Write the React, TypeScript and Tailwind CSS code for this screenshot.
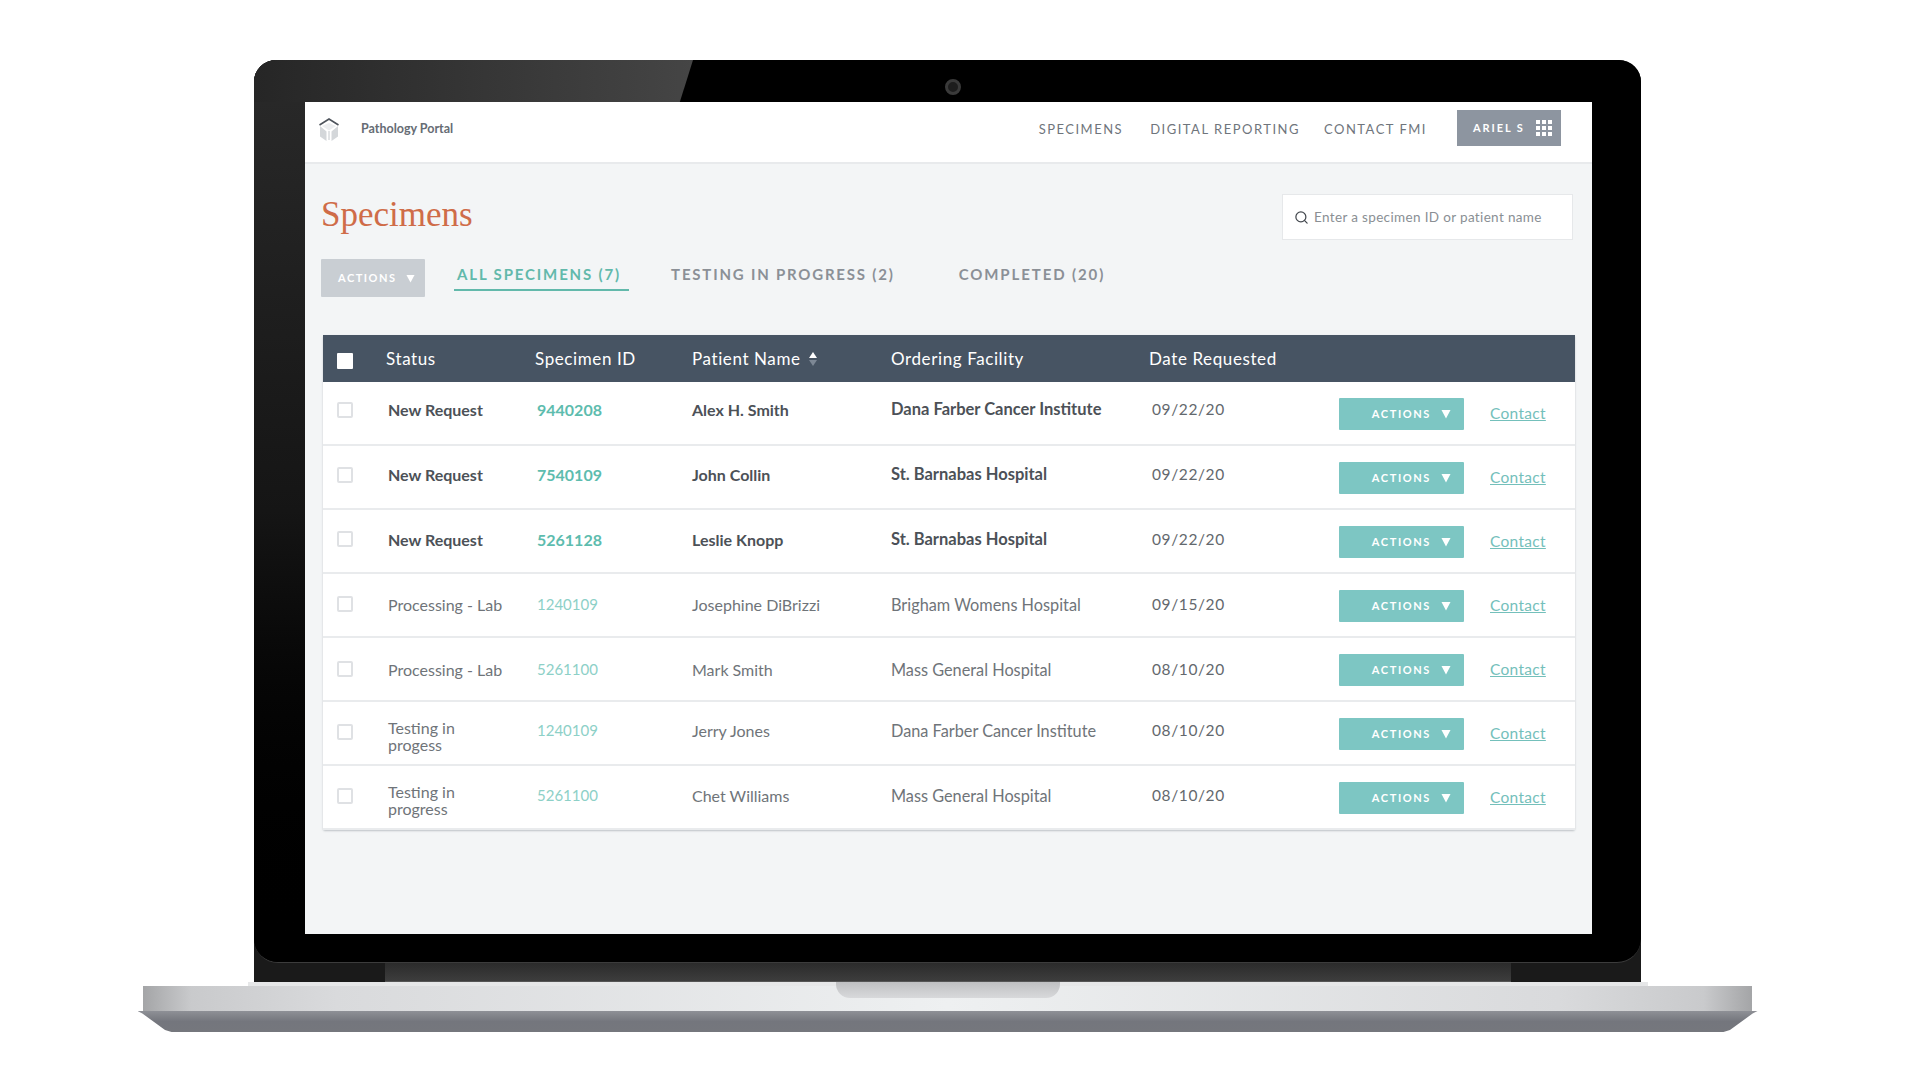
import { Search } from "lucide-react";

const rows = [
  { status: "New Request", id: "9440208", name: "Alex H. Smith", facility: "Dana Farber Cancer Institute", date: "09/22/20", strong: true, pad: "pt-[19px]", box: "pt-[20px]" },
  { status: "New Request", id: "7540109", name: "John Collin", facility: "St. Barnabas Hospital", date: "09/22/20", strong: true, pad: "pt-[20px]", box: "pt-[21px]" },
  { status: "New Request", id: "5261128", name: "Leslie Knopp", facility: "St. Barnabas Hospital", date: "09/22/20", strong: true, pad: "pt-[21px]", box: "pt-[21px]" },
  { status: "Processing - Lab", id: "1240109", name: "Josephine DiBrizzi", facility: "Brigham Womens Hospital", date: "09/15/20", strong: false, pad: "pt-[22px]", box: "pt-[22px]" },
  { status: "Processing - Lab", id: "5261100", name: "Mark Smith", facility: "Mass General Hospital", date: "08/10/20", strong: false, pad: "pt-[23px]", box: "pt-[23px]" },
  { status: "Testing in progess", id: "1240109", name: "Jerry Jones", facility: "Dana Farber Cancer Institute", date: "08/10/20", strong: false, pad: "pt-[20px]", box: "pt-[22px]" },
  { status: "Testing in progress", id: "5261100", name: "Chet Williams", facility: "Mass General Hospital", date: "08/10/20", strong: false, pad: "pt-[21px]", box: "pt-[22px]" },
];

const gridCols = "grid grid-cols-[64px_149px_156px_199px_260px_187px_151px_1fr]";

function Caret({ className }: { className: string }) {
  return (
    <svg viewBox="0 0 10 10" className={className} fill="currentColor">
      <path d="M0.5 1h9L5 9.5z" />
    </svg>
  );
}

function Logo() {
  return (
    <svg viewBox="0 0 22 24" className="h-[24px] w-[22px]" fill="none">
      <path d="M2 8v10.5L8.5 23V13.5zM20 8v10.5L13.5 23V13.5z" fill="#d4d7da" />
      <path d="M4 8l7 4.5L18 8l-7-3z" fill="#eceef0" />
      <path d="M11 13v9" stroke="#c4c8cc" strokeWidth="1" />
      <path d="M1.5 7L11 1l9.5 6" stroke="#4e545c" strokeWidth="1.6" />
    </svg>
  );
}

function AppGrid() {
  return (
    <div className="grid grid-cols-3 gap-[2px]">
      {Array.from({ length: 9 }).map((_, i) => (
        <div key={i} className="h-[4px] w-[4px] bg-white" />
      ))}
    </div>
  );
}

function Checkbox() {
  return <div className="h-[16px] w-[16px] rounded-[2px] border-2 border-[#dfe1e4] bg-white" />;
}

function Row({ r }: { r: (typeof rows)[number] }) {
  const twoLine = r.status.startsWith("Testing");
  return (
    <div className={`${gridCols} h-[64px] border-b-2 border-[#e9ebed] text-[16px] ${r.strong ? "font-bold text-[#4c5157]" : "text-[#6f7479]"}`}>
      <div className={`pl-[14px] ${r.box}`}>
        <Checkbox />
      </div>
      <div className={`pl-[1px] leading-[17px] ${twoLine ? "w-[90px] pt-[17px]" : r.pad}`}>{r.status}</div>
      <div className={`pl-[1px] leading-[17px] ${r.pad} ${r.strong ? "text-[#5dbcae]" : "text-[15px] text-[#8dd0c7]"}`}>{r.id}</div>
      <div className={`leading-[17px] ${r.pad}`}>{r.name}</div>
      <div className={`leading-[17px] ${r.pad} ${r.strong ? "text-[16.5px]" : "text-[16.3px]"}`}>{r.facility}</div>
      <div className={`pl-[1px] text-[15.5px] font-normal leading-[17px] tracking-[0.6px] text-[#63686d] ${r.pad}`}>{r.date}</div>
      <div className="pl-[1px] pt-[16px]">
        <button className="flex h-[32px] w-[125px] items-center justify-end gap-[10px] rounded-[1px] bg-[#7dc6c3] pr-[13px] text-[11px] font-bold tracking-[1.6px] text-white">
          ACTIONS
          <Caret className="h-[10px] w-[10px]" />
        </button>
      </div>
      <div className="pl-[1px] pt-[21px] leading-[20px]">
        <a className="text-[15.5px] font-normal tracking-[0.3px] text-[#74c0bb] underline">Contact</a>
      </div>
      <div />
    </div>
  );
}

export default function App() {
  return (
    <div className="flex h-[1080px] w-[1920px] flex-col items-center overflow-hidden bg-white pr-[25px] pt-[60px] font-['Lato',sans-serif]">
      {/* Lid */}
      <div className="relative flex h-[922px] w-[1387px] flex-col rounded-t-[22px] bg-[#1a1a1a]">
        <div className="relative h-[903px] overflow-hidden rounded-t-[22px] rounded-b-[24px] border-b border-[#3c3c3c] bg-black pl-[51px] pr-[49px] pt-[42px]">
          {/* Left band and glare */}
          <div className="absolute inset-y-0 left-0 w-[51px] bg-gradient-to-b from-[#2a2a2a] via-[#151515] to-black" />
          <div className="absolute left-0 top-0 h-[42px] w-[439px] bg-gradient-to-r from-[#262626] to-[#454545] [clip-path:polygon(0_0,100%_0,97%_100%,0_100%)]" />
          {/* Camera */}
          <div className="absolute left-[691px] top-[19px] h-[16px] w-[16px] rounded-full border-[3px] border-[#3a3a3a] bg-[#1d1d1d]" />

          {/* Screen */}
          <div className="relative flex h-[832px] flex-col bg-[#f3f5f6]">
            <header className="flex h-[62px] items-start border-b-2 border-[#e8eaec] bg-white pl-[13px] pr-[31px] pt-[8px]">
              <div className="mt-[8px]">
                <Logo />
              </div>
              <span className="ml-[21px] mt-[9px] text-[12.5px] font-bold leading-[20px] text-[#666c74]">Pathology Portal</span>
              <nav className="ml-auto mt-[9px] flex items-center text-[13px] leading-[20px] tracking-[1.5px] text-[#6f757c]">
                <a>SPECIMENS</a>
                <a className="ml-[27px]">DIGITAL REPORTING</a>
                <a className="ml-[24px]">CONTACT FMI</a>
              </nav>
              <button className="ml-[30px] flex h-[36px] w-[104px] items-center justify-between bg-[#8d95a0] pl-[16px] pr-[9px] text-[11px] font-bold tracking-[1.9px] text-white">
                ARIEL S
                <AppGrid />
              </button>
            </header>

            <div className="flex flex-col pl-[16px] pr-[17px]">
              <div className="flex items-start justify-between pt-[30px]">
                <h1 className="pt-[1px] font-['Liberation_Serif',serif] text-[35px] leading-[40px] text-[#cf6c48]">Specimens</h1>
                <div className="mr-[2px] flex h-[46px] w-[291px] items-center gap-[5px] border border-[#e6e8ea] bg-white pl-[11px] text-[13.5px] tracking-[0.35px] text-[#8a8f94]">
                  <Search className="h-[15px] w-[15px] text-[#44494f]" strokeWidth={2} />
                  Enter a specimen ID or patient name
                </div>
              </div>

              <div className="mt-[19px] flex items-start">
                <button className="flex h-[38px] w-[104px] items-center gap-[10px] rounded-[1px] bg-[#c9ced3] pl-[17px] text-[11px] font-bold tracking-[1.5px] text-white">
                  ACTIONS
                  <Caret className="h-[9px] w-[9px]" />
                </button>
                <div className="ml-[29px] border-b-2 border-[#62b9ab] pb-[4px] pl-[3px] pr-[8px] pt-[4px] text-[15px] font-bold leading-[22px] tracking-[1.85px] text-[#62b9ab]">
                  ALL SPECIMENS (7)
                </div>
                <div className="ml-[42px] pt-[4px] text-[15px] font-bold leading-[22px] tracking-[1.8px] text-[#8b9096]">TESTING IN PROGRESS (2)</div>
                <div className="ml-[64px] pt-[4px] text-[15px] font-bold leading-[22px] tracking-[1.9px] text-[#8b9096]">COMPLETED (20)</div>
              </div>

              {/* Table */}
              <div className="ml-[2px] mt-[38px] w-[1252px] rounded-[2px] bg-white shadow-[0_1px_2px_rgba(90,100,110,0.35)]">
                <div className={`${gridCols} h-[47px] items-center bg-[#475463] pt-[8px] text-[17px] tracking-[0.6px] text-white`}>
                  <div className="pl-[14px] pt-[4px]">
                    <div className="h-[16px] w-[16px] rounded-[1px] bg-white" />
                  </div>
                  <div className="-ml-[1px]">Status</div>
                  <div className="-ml-[1px]">Specimen ID</div>
                  <div className="flex items-center gap-[8px]">
                    Patient Name
                    <div className="flex flex-col gap-[2px]">
                      <div className="h-0 w-0 border-x-[4px] border-b-[6px] border-x-transparent border-b-white" />
                      <div className="h-0 w-0 border-x-[4px] border-t-[6px] border-x-transparent border-t-[#7d8895]" />
                    </div>
                  </div>
                  <div>Ordering Facility</div>
                  <div className="-ml-[2px]">Date Requested</div>
                  <div />
                  <div />
                  <div />
                </div>
                {rows.map((r, i) => (
                  <Row key={i} r={r} />
                ))}
              </div>
            </div>
          </div>
        </div>
        {/* Hinge */}
        <div className="flex h-[19px] justify-center">
          <div className="h-[19px] w-[1126px] border-b border-[#555] bg-gradient-to-b from-[#2b2b2b] to-[#3d3d3d]" />
        </div>
      </div>

      {/* Base */}
      <div className="h-[4px] w-[1400px] bg-[#e6e7e8]" />
      <div className="relative h-[25px] w-[1609px] bg-[linear-gradient(90deg,#a4a5a7_0%,#c9cacc_3%,#d9dadc_12%,#eef0f1_50%,#d9dadc_88%,#c9cacc_97%,#a4a5a7_100%)]">
        <div className="absolute -top-[4px] left-[693px] h-[16px] w-[224px] rounded-b-[14px] bg-gradient-to-b from-[#bfc0c2] to-[#d8d9db]" />
      </div>
      <div className="h-[21px] w-[1620px] bg-gradient-to-b from-[#8e9096] via-[#74767d] to-[#75777d] [clip-path:polygon(0_0,100%_0,99.7%_12%,98.3%_90%,97.9%_100%,2.1%_100%,1.7%_90%,0.3%_12%)]" />
    </div>
  );
}
